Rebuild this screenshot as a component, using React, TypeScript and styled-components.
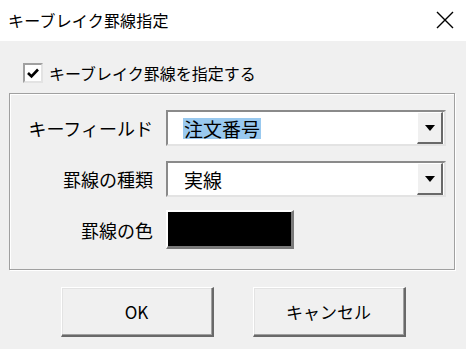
import styled, { createGlobalStyle } from "styled-components";

const GlobalStyle = createGlobalStyle`
  html, body {
    margin: 0;
    padding: 0;
    background: #f0f0f0;
  }
  body {
    font-family: "Noto Sans CJK JP", "Noto Sans", sans-serif;
    color: #000;
  }
`;

const Dialog = styled.div`
  width: 466px;
  height: 349px;
  display: flex;
  flex-direction: column;
  background: #f0f0f0;
  overflow: hidden;
`;

const TitleBar = styled.div`
  height: 41px;
  flex: none;
  background: #fff;
  display: flex;
  align-items: center;
  justify-content: space-between;
  padding: 0 12px 2px 8px;
  box-sizing: border-box;
`;

const Title = styled.span`
  font-size: 16px;
  letter-spacing: 0.2px;
`;

const Body = styled.div`
  flex: 1;
  display: flex;
  flex-direction: column;
  padding: 22px 11px 0 9px;
`;

const CheckRow = styled.label`
  display: flex;
  align-items: center;
  gap: 6px;
  margin-left: 14px;
  height: 20px;
  font-size: 16px;
`;

const CheckBox = styled.span`
  width: 20px;
  height: 20px;
  box-sizing: border-box;
  background: #fff;
  border: 2px solid #a0a0a0;
  border-right-color: #e3e3e3;
  border-bottom-color: #e3e3e3;
  display: flex;
  align-items: center;
  justify-content: center;
`;

const GroupBox = styled.div`
  margin-top: 10px;
  height: 177px;
  box-sizing: border-box;
  border: 1px solid #a0a0a0;
  box-shadow: inset 1px 1px 0 #fff, 1px 1px 0 #fff;
  display: grid;
  grid-template-columns: 143px 1fr;
  grid-auto-rows: 36px;
  column-gap: 13px;
  row-gap: 15px;
  padding: 16px 8px 0 0;
  align-content: start;
`;

const FieldLabel = styled.div`
  display: flex;
  align-items: center;
  justify-content: flex-end;
  font-size: 18px;
`;

const Combo = styled.div`
  display: flex;
  align-items: stretch;
  box-sizing: border-box;
  background: #fff;
  border-style: solid;
  border-width: 2px;
  border-color: #8a8a8a #e3e3e3 #e3e3e3 #8a8a8a;
  padding: 0 1px 0 0;
`;

const ComboText = styled.div`
  flex: 1;
  display: flex;
  align-items: center;
  padding-left: 15px;
  font-size: 19px;
`;

const Selected = styled.span<{ $active?: boolean }>`
  background: ${(p) => (p.$active ? "#99c9ef" : "transparent")};
  line-height: 21px;
  padding: 0 1px;
`;

const DropButton = styled.div`
  width: 26px;
  box-sizing: border-box;
  background: #f0f0f0;
  border-style: solid;
  border-width: 1px 2px 2px 1px;
  border-color: #fff #696969 #696969 #fff;
  display: flex;
  align-items: center;
  justify-content: center;
`;

const Swatch = styled.div<{ $color: string }>`
  width: 128px;
  height: 39px;
  margin-top: -2px;
  box-sizing: border-box;
  background: ${(p) => p.$color};
  border-style: solid;
  border-width: 2px 3px 3px 2px;
  border-color: #fff #7a7a7a #7a7a7a #fff;
`;

const ButtonRow = styled.div`
  display: flex;
  justify-content: center;
  gap: 39px;
  margin-top: 17px;
  padding-left: 2px;
`;

const Button = styled.button`
  width: 153px;
  height: 50px;
  box-sizing: border-box;
  background: #f0f0f0;
  border-style: solid;
  border-width: 1px 2px 2px 1px;
  border-color: #fff #696969 #696969 #fff;
  box-shadow: inset -1px -1px 0 #a0a0a0, inset 1px 1px 0 #e3e3e3;
  font-family: "Noto Sans CJK JP", "Noto Sans", sans-serif;
  font-size: 17px;
  color: #000;
  padding: 0;
`;

const Arrow = () => (
  <svg width="10" height="6" viewBox="0 0 10 6">
    <path d="M0 0 H10 L5 6 Z" fill="#000" />
  </svg>
);

export default function App() {
  return (
    <>
      <GlobalStyle />
      <Dialog>
        <TitleBar>
          <Title>キーブレイク罫線指定</Title>
          <svg width="18" height="18" viewBox="0 0 18 18">
            <path d="M1 1 L17 17 M17 1 L1 17" stroke="#000" strokeWidth="1.4" />
          </svg>
        </TitleBar>
        <Body>
          <CheckRow>
            <CheckBox>
              <svg width="12" height="11" viewBox="0 0 12 11">
                <path d="M1 5 L4.5 8.5 L11 1.5" stroke="#000" strokeWidth="2.6" fill="none" />
              </svg>
            </CheckBox>
            キーブレイク罫線を指定する
          </CheckRow>
          <GroupBox>
            <FieldLabel>キーフィールド</FieldLabel>
            <Combo>
              <ComboText>
                <Selected $active>注文番号</Selected>
              </ComboText>
              <DropButton>
                <Arrow />
              </DropButton>
            </Combo>
            <FieldLabel>罫線の種類</FieldLabel>
            <Combo>
              <ComboText>
                <Selected>実線</Selected>
              </ComboText>
              <DropButton>
                <Arrow />
              </DropButton>
            </Combo>
            <FieldLabel>罫線の色</FieldLabel>
            <Swatch $color="#000" />
          </GroupBox>
          <ButtonRow>
            <Button>OK</Button>
            <Button>キャンセル</Button>
          </ButtonRow>
        </Body>
      </Dialog>
    </>
  );
}
